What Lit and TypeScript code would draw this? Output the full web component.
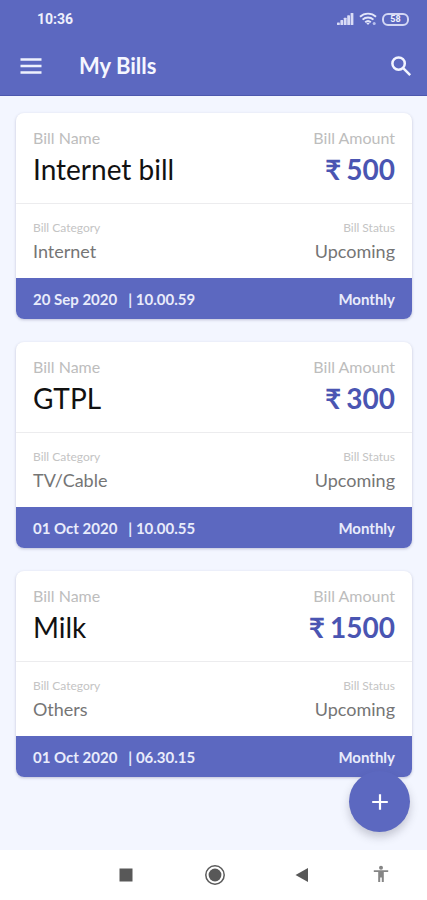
import { LitElement, html, css, svg } from "lit";
import { customElement, property } from "lit/decorators.js";

interface Bill {
  name: string;
  amount: string;
  category: string;
  status: string;
  date: string;
  time: string;
  cycle: string;
}

const BILLS: Bill[] = [
  { name: "Internet bill", amount: "500", category: "Internet", status: "Upcoming", date: "20 Sep 2020", time: "10.00.59", cycle: "Monthly" },
  { name: "GTPL", amount: "300", category: "TV/Cable", status: "Upcoming", date: "01 Oct 2020", time: "10.00.55", cycle: "Monthly" },
  { name: "Milk", amount: "1500", category: "Others", status: "Upcoming", date: "01 Oct 2020", time: "06.30.15", cycle: "Monthly" },
];

@customElement("status-bar")
export class StatusBar extends LitElement {
  static styles = css`
    :host {
      display: flex;
      align-items: center;
      justify-content: space-between;
      height: 38px;
      padding: 0 18px 0 37px;
      color: #eef0fc;
      font: 700 14px/20px Roboto, sans-serif;
    }
    .icons {
      display: flex;
      align-items: center;
      gap: 5px;
    }
    svg {
      display: block;
    }
    .battery {
      box-sizing: border-box;
      width: 27px;
      height: 13px;
      border: 2px solid #d3d7f4;
      border-radius: 6px;
      font-size: 9px;
      line-height: 9px;
      text-align: center;
    }
  `;

  render() {
    return html`
      <span>10:36</span>
      <div class="icons">
        <svg width="18" height="14" viewBox="0 0 18 14" fill="#d9dcf6" aria-hidden="true">
          ${[0, 1, 2, 3, 4].map((i) => svg`<rect x=${1 + i * 3.4} y=${10.5 - i * 2.4} width="2.8" height=${2.5 + i * 2.4} rx="0.6" />`)}
        </svg>
        <svg width="18" height="14" viewBox="0 0 18 14" fill="none" stroke="#e3e6fa" stroke-width="1.9" aria-hidden="true">
          <path d="M1 4.8C5.4.6 12.6.6 17 4.8M3.6 7.6c3-2.8 7.8-2.8 10.8 0M6.2 10.2c1.6-1.5 4-1.5 5.6 0" />
          <path d="M7 10.8 9 13l2-2.2z" fill="#e3e6fa" stroke="none" />
          <circle cx="15.2" cy="11.6" r="1.5" fill="#b9c0ee" stroke="none" />
        </svg>
        <div class="battery">58</div>
      </div>
    `;
  }
}

@customElement("bill-card")
export class BillCard extends LitElement {
  @property({ attribute: false }) bill!: Bill;

  static styles = css`
    :host {
      display: block;
      overflow: hidden;
      border-radius: 8px;
      background: #fff;
      box-shadow: 0 1px 3px rgba(60, 64, 110, 0.28);
    }
    .row {
      display: flex;
      justify-content: space-between;
      padding: 0 17px;
    }
    .main {
      padding-top: 15px;
      padding-bottom: 13px;
      border-bottom: 1px solid #ececee;
    }
    .details {
      padding-top: 16px;
      padding-bottom: 12px;
    }
    .end {
      text-align: right;
    }
    .label {
      color: #bdbdbd;
      font-size: 16px;
      line-height: 20px;
    }
    .name,
    .amount {
      font-size: 28px;
      line-height: 42px;
    }
    .name {
      color: #111;
    }
    .amount {
      display: flex;
      justify-content: flex-end;
      gap: 5px;
      color: #4a55b2;
      font-weight: 700;
    }
    .small {
      color: #c4c4c4;
      font-size: 12px;
      line-height: 16px;
    }
    .value {
      color: #757575;
      font-size: 18px;
      line-height: 30px;
    }
    .due {
      align-items: center;
      height: 41px;
      background: #5c68c0;
      color: #e9ecfb;
      font-size: 15px;
      font-weight: 700;
    }
    .when {
      display: flex;
      gap: 11px;
    }
  `;

  render() {
    const b = this.bill;
    return html`
      <div class="row main">
        <div>
          <div class="label">Bill Name</div>
          <div class="name">${b.name}</div>
        </div>
        <div class="end">
          <div class="label">Bill Amount</div>
          <div class="amount"><span>₹</span><span>${b.amount}</span></div>
        </div>
      </div>
      <div class="row details">
        <div>
          <div class="small">Bill Category</div>
          <div class="value">${b.category}</div>
        </div>
        <div class="end">
          <div class="small">Bill Status</div>
          <div class="value">${b.status}</div>
        </div>
      </div>
      <div class="row due">
        <div class="when"><span>${b.date}</span><span>| ${b.time}</span></div>
        <span>${b.cycle}</span>
      </div>
    `;
  }
}

@customElement("app-root")
export class AppRoot extends LitElement {
  static styles = css`
    :host {
      display: flex;
      flex-direction: column;
      min-height: 100vh;
      background: #f3f6ff;
      font-family: Lato, "Noto Sans", sans-serif;
    }
    header {
      background: #5c68c0;
      border-bottom: 1px solid #4d58ae;
    }
    .bar {
      display: flex;
      align-items: center;
      height: 57px;
      padding: 0 14px 2px 19px;
      box-sizing: border-box;
    }
    h1 {
      flex: 1;
      margin: 0 0 0 36px;
      color: #f5f7ff;
      font-size: 22px;
      line-height: 28px;
      font-weight: 700;
    }
    button {
      display: grid;
      place-items: center;
      padding: 0;
      border: 0;
      background: none;
    }
    svg {
      display: block;
    }
    main {
      position: relative;
      flex: 1;
      display: flex;
      flex-direction: column;
      gap: 23px;
      padding: 17px 15px 73px 16px;
    }
    .add {
      position: absolute;
      right: 17px;
      bottom: 18px;
      width: 61px;
      height: 61px;
      border-radius: 50%;
      background: #5c68c0;
      box-shadow: 0 5px 8px rgba(60, 60, 80, 0.25);
    }
    nav {
      display: grid;
      grid-template-columns: 89fr 89fr 85fr 73fr;
      place-items: center;
      height: 50px;
      padding: 0 10px 0 19%;
      background: #fff;
    }
  `;

  render() {
    return html`
      <header>
        <status-bar></status-bar>
        <div class="bar">
          <button aria-label="Open menu">
            <svg width="24" height="24" viewBox="0 0 24 24" stroke="#eef1fd" stroke-width="2.3"><path d="M1.5 5.5h21M1.5 12h21M1.5 18.5h21" /></svg>
          </button>
          <h1>My Bills</h1>
          <button aria-label="Search">
            <svg width="24" height="24" viewBox="0 0 24 24" fill="none" stroke="#f3f5ff" stroke-width="2.5"><circle cx="9.6" cy="9.6" r="6.2" /><path d="m14.2 14.2 7 7" /></svg>
          </button>
        </div>
      </header>
      <main>
        ${BILLS.map((b) => html`<bill-card .bill=${b}></bill-card>`)}
        <button class="add" aria-label="Add bill">
          <svg width="18" height="18" viewBox="0 0 18 18" stroke="#fff" stroke-width="2.2"><path d="M9 1.2v15.6M1.2 9h15.6" /></svg>
        </button>
      </main>
      <nav>
        <button aria-label="Recent apps">
          <svg width="24" height="24" viewBox="0 0 24 24"><rect x="5.5" y="5.5" width="13" height="13" fill="#585858" /></svg>
        </button>
        <button aria-label="Home">
          <svg width="24" height="24" viewBox="0 0 24 24"><circle cx="12" cy="12" r="9.2" fill="none" stroke="#5a5a5a" stroke-width="1.5" /><circle cx="12" cy="12" r="6.4" fill="#585858" /></svg>
        </button>
        <button aria-label="Back">
          <svg width="24" height="24" viewBox="0 0 24 24"><path d="M5.5 12 18 5v14z" fill="#585858" /></svg>
        </button>
        <button aria-label="Accessibility">
          <svg width="24" height="24" viewBox="0 0 24 24" fill="#858585"><circle cx="12" cy="4.8" r="2" /><path d="M4.8 7.2h14.4v1.9h-4.4V19h-2v-4.6h-1.6V19h-2V9.1H4.8z" /></svg>
        </button>
      </nav>
    `;
  }
}
